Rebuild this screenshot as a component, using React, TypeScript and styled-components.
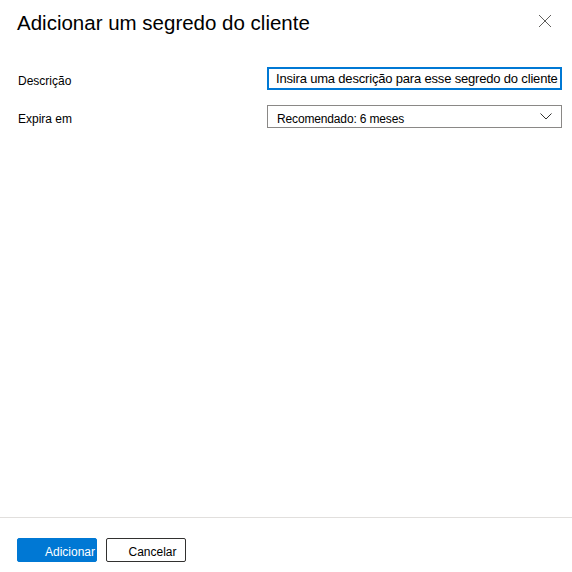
import React from "react";
import styled, { createGlobalStyle } from "styled-components";

const Global = createGlobalStyle`
  html, body { margin: 0; padding: 0; background: #fff; }
  body { font-family: "Segoe UI", "Liberation Sans", Arial, sans-serif; color: #323130; }
  * { box-sizing: border-box; }
`;

const Panel = styled.div`
  width: 572px;
  height: 572px;
  display: flex;
  flex-direction: column;
  background: #fff;
`;

const Header = styled.div`
  display: flex;
  align-items: flex-start;
  justify-content: space-between;
  padding: 10px 20px 0 17px;
  height: 52px;
`;

const Title = styled.h1`
  margin: 0;
  font-size: 20.5px;
  font-weight: 400;
  color: #000;
  line-height: 26px;
`;

const CloseButton = styled.button`
  border: none;
  background: none;
  padding: 0;
  margin-top: 4px;
  width: 14px;
  height: 14px;
  display: flex;
  cursor: pointer;
`;

const Body = styled.div`
  flex: 1;
  display: flex;
  flex-direction: column;
  gap: 15px;
  padding: 15px 10px 0 18px;
`;

const Row = styled.div`
  display: grid;
  grid-template-columns: 249px 295px;
  align-items: center;
`;

const Label = styled.label`
  font-size: 12px;
  color: #000;
  padding-top: 4px;
`;

const Field = styled.div<{ $focused?: boolean }>`
  height: 23px;
  border: ${(p) => (p.$focused ? "2px solid #0078d4" : "1px solid #8a8886")};
  display: flex;
  align-items: center;
  justify-content: space-between;
  padding: ${(p) => (p.$focused ? "0 4px 0 7px" : "0 9px 0 9px")};
  color: #000;
  white-space: nowrap;
  overflow: hidden;
`;

const FieldText = styled.span<{ $large?: boolean }>`
  font-size: ${(p) => (p.$large ? "13px" : "12px")};
  letter-spacing: ${(p) => (p.$large ? "-0.18px" : "-0.15px")};
  padding-top: ${(p) => (p.$large ? "0" : "5px")};
`;

const Footer = styled.div`
  border-top: 1px solid #e1dfdd;
  height: 55px;
  display: flex;
  gap: 9px;
  padding: 20px 0 0 17px;
`;

const Button = styled.button<{ $primary?: boolean }>`
  width: 80px;
  height: 24px;
  border-radius: 2px;
  font-family: inherit;
  font-size: 12px;
  padding: 3px 1px 0 ${(p) => (p.$primary ? "0" : "14px")};
  display: flex;
  align-items: center;
  justify-content: ${(p) => (p.$primary ? "flex-end" : "center")};
  background: ${(p) => (p.$primary ? "#0078d4" : "#fff")};
  color: ${(p) => (p.$primary ? "#fff" : "#000")};
  border: ${(p) => (p.$primary ? "1px solid #0078d4" : "1px solid #323130")};
`;

export default function App() {
  return (
    <>
      <Global />
      <Panel>
        <Header>
          <Title>Adicionar um segredo do cliente</Title>
          <CloseButton aria-label="Fechar">
            <svg width="14" height="14" viewBox="0 0 14 14">
              <path d="M1 1 L13 13 M13 1 L1 13" stroke="#605e5c" strokeWidth="1" fill="none" />
            </svg>
          </CloseButton>
        </Header>
        <Body>
          <Row>
            <Label>Descrição</Label>
            <Field $focused>
              <FieldText $large>Insira uma descrição para esse segredo do cliente</FieldText>
            </Field>
          </Row>
          <Row>
            <Label>Expira em</Label>
            <Field>
              <FieldText>Recomendado: 6 meses</FieldText>
              <svg width="12" height="7" viewBox="0 0 12 7">
                <path d="M0.5 0.5 L6 6 L11.5 0.5" stroke="#323130" strokeWidth="1" fill="none" />
              </svg>
            </Field>
          </Row>
        </Body>
        <Footer>
          <Button $primary>Adicionar</Button>
          <Button>Cancelar</Button>
        </Footer>
      </Panel>
    </>
  );
}
